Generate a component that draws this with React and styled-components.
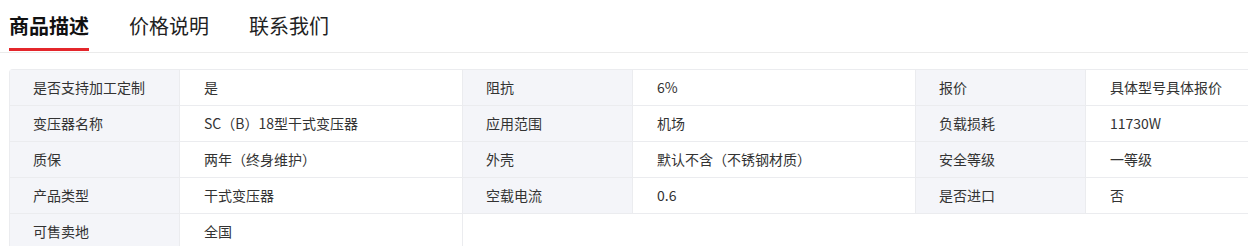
import React from 'react';
import styled, { createGlobalStyle } from 'styled-components';

const GlobalStyle = createGlobalStyle`
  html, body {
    margin: 0;
    padding: 0;
    background: #fff;
    overflow: hidden;
  }
  body {
    font-family: "Noto Sans CJK SC", "Liberation Sans", sans-serif;
    color: #333;
  }
`;

const tabs = ['商品描述', '价格说明', '联系我们'];

const specs = [
  ['是否支持加工定制', '是'],
  ['阻抗', '6%'],
  ['报价', '具体型号具体报价'],
  ['变压器名称', 'SC（B）18型干式变压器'],
  ['应用范围', '机场'],
  ['负载损耗', '11730W'],
  ['质保', '两年（终身维护）'],
  ['外壳', '默认不含（不锈钢材质）'],
  ['安全等级', '一等级'],
  ['产品类型', '干式变压器'],
  ['空载电流', '0.6'],
  ['是否进口', '否'],
  ['可售卖地', '全国'],
];

const Page = styled.div`
  width: 1248px;
  height: 246px;
  overflow: hidden;
`;

const TabBar = styled.div`
  display: flex;
  gap: 40px;
  padding-left: 9px;
  height: 52px;
  border-bottom: 1px solid #ebebeb;
`;

const Tab = styled.div`
  height: 51px;
  box-sizing: border-box;
  padding-top: 12px;
  font-size: 20px;
  line-height: 28px;
  font-weight: ${p => (p.active ? 700 : 400)};
  color: ${p => (p.active ? '#111' : '#222')};
  border-bottom: 3px solid ${p => (p.active ? '#e4262b' : 'transparent')};
  cursor: pointer;
`;

const SpecGrid = styled.div`
  margin: 16px 0 0 9px;
  display: grid;
  grid-template-columns: repeat(3, 453px);
  width: max-content;
  border-top: 1px solid #ebecef;
  border-left: 1px solid #ebecef;
  border-top-left-radius: 4px;
`;

const Item = styled.div`
  display: flex;
  height: 36px;
  box-sizing: border-box;
  border-right: 1px solid #ebecef;
  border-bottom: 1px solid #ebecef;
  font-size: 14px;
  line-height: 35px;
`;

const Label = styled.div`
  width: 170px;
  flex-shrink: 0;
  box-sizing: border-box;
  padding-left: 23px;
  background: #f4f5f9;
  border-right: 1px solid #ebecef;
  white-space: nowrap;
`;

const Value = styled.div`
  flex: 1;
  padding-left: 24px;
  background: #fff;
  white-space: nowrap;
`;

export default function App() {
  return (
    <Page>
      <GlobalStyle />
      <TabBar>
        {tabs.map((t, i) => (
          <Tab key={t} active={i === 0}>{t}</Tab>
        ))}
      </TabBar>
      <SpecGrid>
        {specs.map(([label, value]) => (
          <Item key={label}>
            <Label>{label}</Label>
            <Value>{value}</Value>
          </Item>
        ))}
      </SpecGrid>
    </Page>
  );
}
